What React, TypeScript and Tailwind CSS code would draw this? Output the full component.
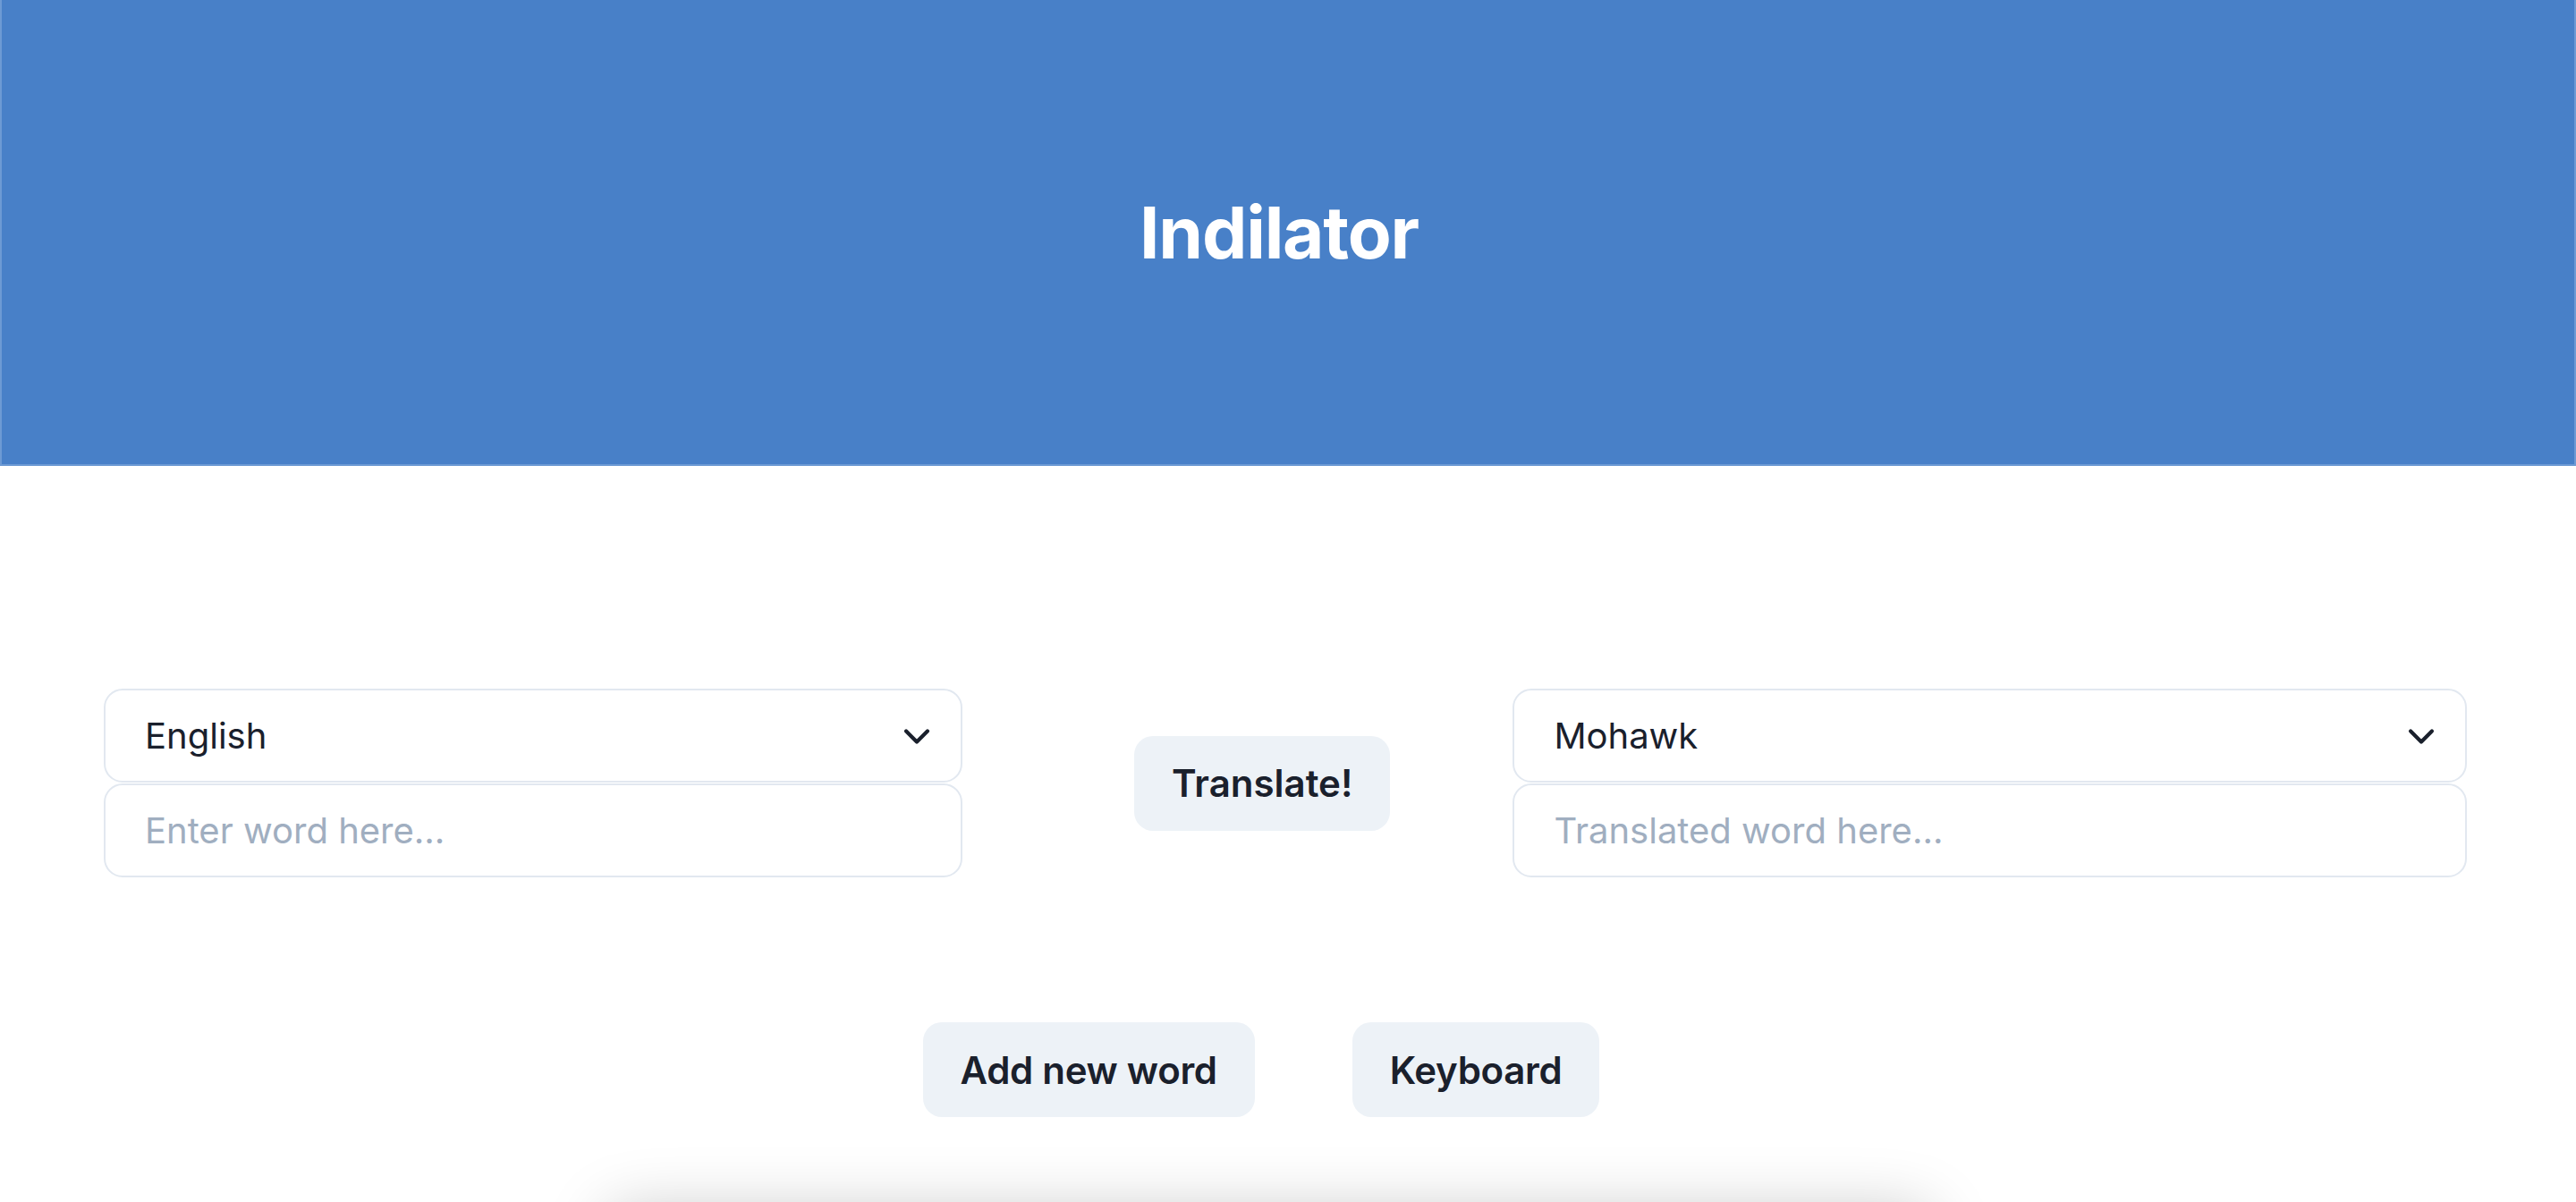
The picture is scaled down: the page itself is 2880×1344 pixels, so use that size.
import React from "react";

function Chevron() {
  return (
    <svg width="44" height="44" viewBox="0 0 24 24" fill="none" stroke="#1A202C" strokeWidth="2.3" strokeLinecap="round" strokeLinejoin="round">
      <polyline points="5.5 9 12 15.5 18.5 9" />
    </svg>
  );
}

function LangBox({ lang, placeholder, width }: { lang: string; placeholder: string; width: string }) {
  return (
    <div className={`flex flex-col gap-[1px] ${width}`}>
      <div className="flex h-[105px] items-center justify-between rounded-[21px] border-2 border-[#E2E8F0] bg-white pl-[44px] pr-[27px] text-[40px] text-[#1A202C]">
        <span>{lang}</span>
        <Chevron />
      </div>
      <div className="flex h-[105px] items-center rounded-[21px] border-2 border-[#E2E8F0] bg-white pl-[44px] text-[40px] text-[#A0AEC0]">
        <span>{placeholder}</span>
      </div>
    </div>
  );
}

export default function App() {
  return (
    <div className="min-h-screen bg-white" style={{ fontFamily: "Inter, 'Noto Sans', sans-serif" }}>
      <header className="flex h-[521px] items-center justify-center border-x-2 border-b-2 border-[#6D9AD4] bg-[#4880C8] pr-[20px]">
        <h1 className="text-[80px] font-bold tracking-[-1.2px] text-white">Indilator</h1>
      </header>
      <main className="pt-[249px]">
        <div className="flex items-center pl-[116px]">
          <LangBox lang="English" placeholder="Enter word here..." width="w-[960px]" />
          <button className="ml-[192px] h-[106px] rounded-[21px] bg-[#EDF2F7] px-[42px] text-[42px] font-semibold text-[#1A202C]">
            Translate!
          </button>
          <div className="ml-[137px]">
            <LangBox lang="Mohawk" placeholder="Translated word here..." width="w-[1067px]" />
          </div>
        </div>
        <div className="mt-[162px] flex justify-center gap-[109px] pr-[60px]">
          <button className="h-[106px] rounded-[21px] bg-[#EDF2F7] px-[42px] text-[42px] font-semibold tracking-[-0.3px] text-[#1A202C]">
            Add new word
          </button>
          <button className="h-[106px] rounded-[21px] bg-[#EDF2F7] px-[42px] text-[42px] font-semibold tracking-[-0.3px] text-[#1A202C]">
            Keyboard
          </button>
        </div>
        <div className="mt-[105px] flex justify-center pr-[42px] pb-[200px]">
          <div className="h-[600px] w-[1480px] rounded-[21px] bg-white shadow-[0_0_70px_rgba(0,0,0,0.22)]" />
        </div>
      </main>
    </div>
  );
}
